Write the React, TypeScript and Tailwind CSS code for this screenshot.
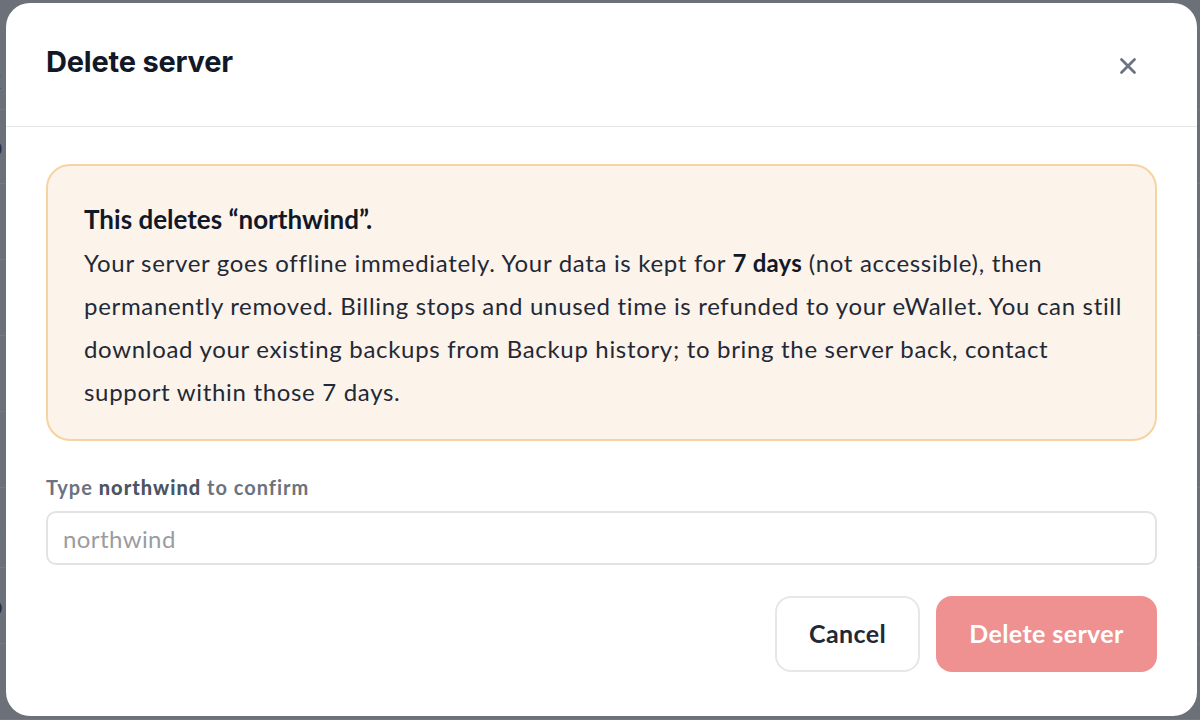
import React from "react";

const body = { fontFamily: "Lato, 'Noto Sans', sans-serif" };
const head = { fontFamily: "Inter, 'Noto Sans', sans-serif" };

export default function App() {
  const rows = [
    { t: "x", h: 60 },
    { t: "b", h: 74 },
    { t: "/", h: 76 },
    { t: "", h: 76 },
    { t: "", h: 76 },
    { t: "", h: 76 },
    { t: "c", h: 80 },
    { t: "o", h: 76 },
    { t: "", h: 76 },
  ];
  return (
    <div className="relative w-[1200px] h-[720px] overflow-hidden bg-[#6b7079]" style={body}>
      {/* page behind the overlay */}
      <div className="flex flex-col pt-[50px] -ml-[12px] text-[26px] text-[#2a3140]">
        {rows.map((r, i) => (
          <div key={i} style={{ height: r.h }} className="flex items-center border-b border-[#737882]">
            {r.t}
          </div>
        ))}
      </div>

      {/* modal */}
      <div className="absolute left-[6px] top-[3px] w-[1191px] h-[713px] bg-white rounded-[24px] flex flex-col">
        <div className="h-[124px] border-b border-[#e5e7eb] flex items-start justify-between pl-[40px] pr-[60px] pt-[41px]">
          <h1 className="text-[29px] leading-[36px] font-bold text-[#111827] tracking-[-0.2px]" style={head}>
            Delete server
          </h1>
          <button className="mt-[13px] w-[18px] h-[18px] flex items-center justify-center text-[#6b7280]">
            <svg width="18" height="18" viewBox="0 0 18 18" fill="none" stroke="currentColor" strokeWidth="2.8" strokeLinecap="round">
              <path d="M2.5 2.5L15.5 15.5M15.5 2.5L2.5 15.5" />
            </svg>
          </button>
        </div>

        <div className="px-[40px] pt-[37px] flex flex-col">
          <div className="h-[277px] rounded-[24px] border-2 border-[#f6d3a3] bg-[#fcf3ea] pl-[36px] pr-[20px] pt-[35px]">
            <div className="text-[26px] leading-[36px] font-bold text-[#111827] tracking-[0px]">
              This deletes “northwind”.
            </div>
            <p className="mt-[4px] text-[24px] leading-[43px] text-[#1f2937] tracking-[0.68px] whitespace-nowrap">
              Your server goes offline immediately. Your data is kept for{" "}
              <span className="font-bold text-[#111827] tracking-[0.2px]">7 days</span> (not accessible), then
              <br />
              permanently removed. Billing stops and unused time is refunded to your eWallet. You can still
              <br />
              download your existing backups from Backup history; to bring the server back, contact
              <br />
              support within those 7 days.
            </p>
          </div>

          <label className="mt-[32px] text-[20px] leading-[28px] font-bold text-[#6b7280] tracking-[1px]">
            Type <span className="font-black text-[#4b5563]">northwind</span> to confirm
          </label>
          <input
            placeholder="northwind"
            className="mt-[10px] h-[54px] rounded-[10px] border-2 border-[#e2e3e5] px-[15px] text-[24px] tracking-[0.4px] text-[#111827] placeholder:text-[#9a9ca0] outline-none"
            style={body}
          />

          <div className="mt-[31px] flex justify-end gap-[16px]">
            <button className="h-[76px] w-[145px] rounded-[16px] border-2 border-[#e5e7eb] bg-white text-[25px] tracking-[0.4px] font-bold text-[#1f2937]">
              Cancel
            </button>
            <button className="h-[76px] w-[221px] rounded-[16px] bg-[#ee9190] text-[25px] tracking-[0.4px] font-bold text-white">
              Delete server
            </button>
          </div>
        </div>
      </div>
    </div>
  );
}
